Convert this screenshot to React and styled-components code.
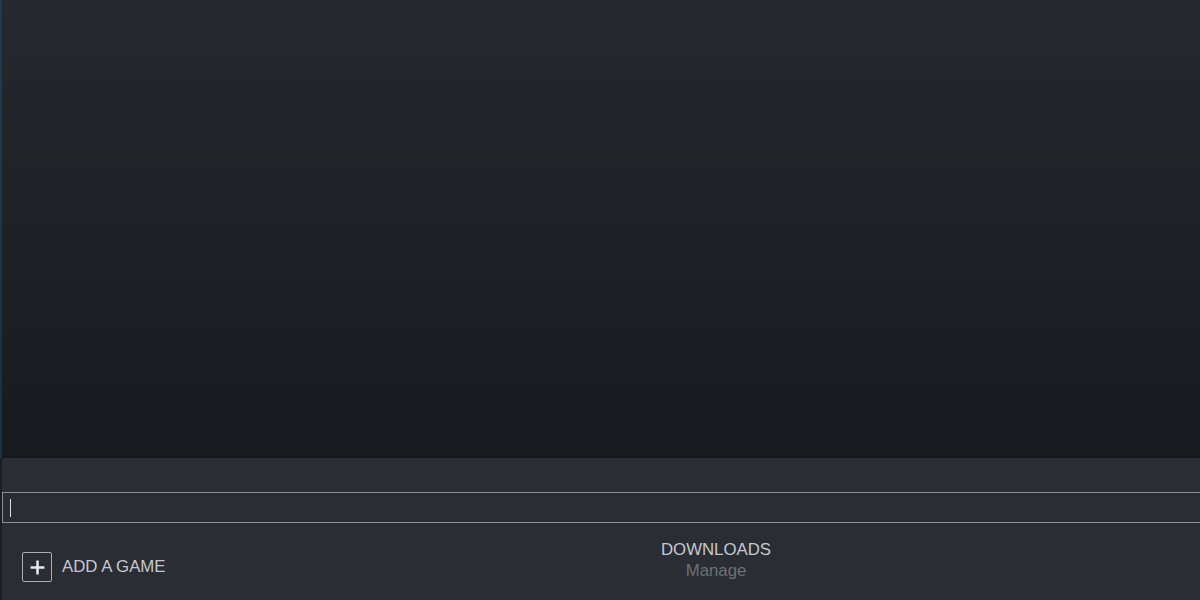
import React from 'react';
import styled, { createGlobalStyle } from 'styled-components';

const GlobalStyle = createGlobalStyle`
  html, body {
    margin: 0;
    padding: 0;
    background: #1b1e23;
    font-family: "Liberation Sans", Arial, sans-serif;
  }
`;

const Window = styled.div`
  width: 1200px;
  height: 600px;
  display: flex;
  flex-direction: column;
  overflow: hidden;
  background: #1b1e23;
`;

const Shelf = styled.div`
  height: 458px;
  background: linear-gradient(180deg, #25282e 0%, #1f2227 45%, #16191d 100%);
  box-shadow: inset 2px 0 0 rgba(40, 90, 130, 0.35);
`;

const Footer = styled.div`
  flex: 1;
  display: flex;
  flex-direction: column;
  margin-left: 2px;
  background: #2a2d33;
`;

const Spacer = styled.div`
  height: 34px;
`;

const InputBar = styled.div`
  height: 29px;
  margin-right: -4px;
  border: 1px solid #8b8f98;
  background: #2a2d34;
  display: flex;
  align-items: center;
  padding-left: 7px;
`;

const Caret = styled.div`
  width: 1px;
  height: 18px;
  background: #d8dbe0;
`;

const BottomRow = styled.div`
  flex: 1;
  display: grid;
  grid-template-columns: 1fr auto 1fr;
  align-items: start;
`;

const AddGame = styled.button`
  display: flex;
  align-items: center;
  gap: 10px;
  margin: 29px 0 0 20px;
  padding: 0;
  border: none;
  background: none;
  color: #c6c9cf;
  font-family: "Liberation Sans", Arial, sans-serif;
  font-size: 16.8px;
  cursor: pointer;
  justify-self: start;
`;

const PlusBox = styled.span`
  width: 30px;
  height: 30px;
  box-sizing: border-box;
  border: 1.5px solid #a9adb5;
  border-radius: 2px;
  display: flex;
  align-items: center;
  justify-content: center;
`;

const Downloads = styled.div`
  margin-top: 16px;
  margin-left: 230px;
  display: flex;
  flex-direction: column;
  align-items: center;
  font-family: "Liberation Sans", Arial, sans-serif;
  font-size: 16.8px;
  line-height: 21px;
`;

const DownloadsTitle = styled.span`
  color: #c6c9d0;
`;

const DownloadsSub = styled.span`
  color: #6d7178;
`;

export default function App() {
  return (
    <>
      <GlobalStyle />
      <Window>
        <Shelf />
        <Footer>
          <Spacer />
          <InputBar>
            <Caret />
          </InputBar>
          <BottomRow>
            <AddGame>
              <PlusBox>
                <svg width="17" height="17" viewBox="0 0 16 16">
                  <path d="M8 1.5v13M1.5 8h13" stroke="#e4e6ea" strokeWidth="2.4" />
                </svg>
              </PlusBox>
              ADD A GAME
            </AddGame>
            <Downloads>
              <DownloadsTitle>DOWNLOADS</DownloadsTitle>
              <DownloadsSub>Manage</DownloadsSub>
            </Downloads>
            <div />
          </BottomRow>
        </Footer>
      </Window>
    </>
  );
}
